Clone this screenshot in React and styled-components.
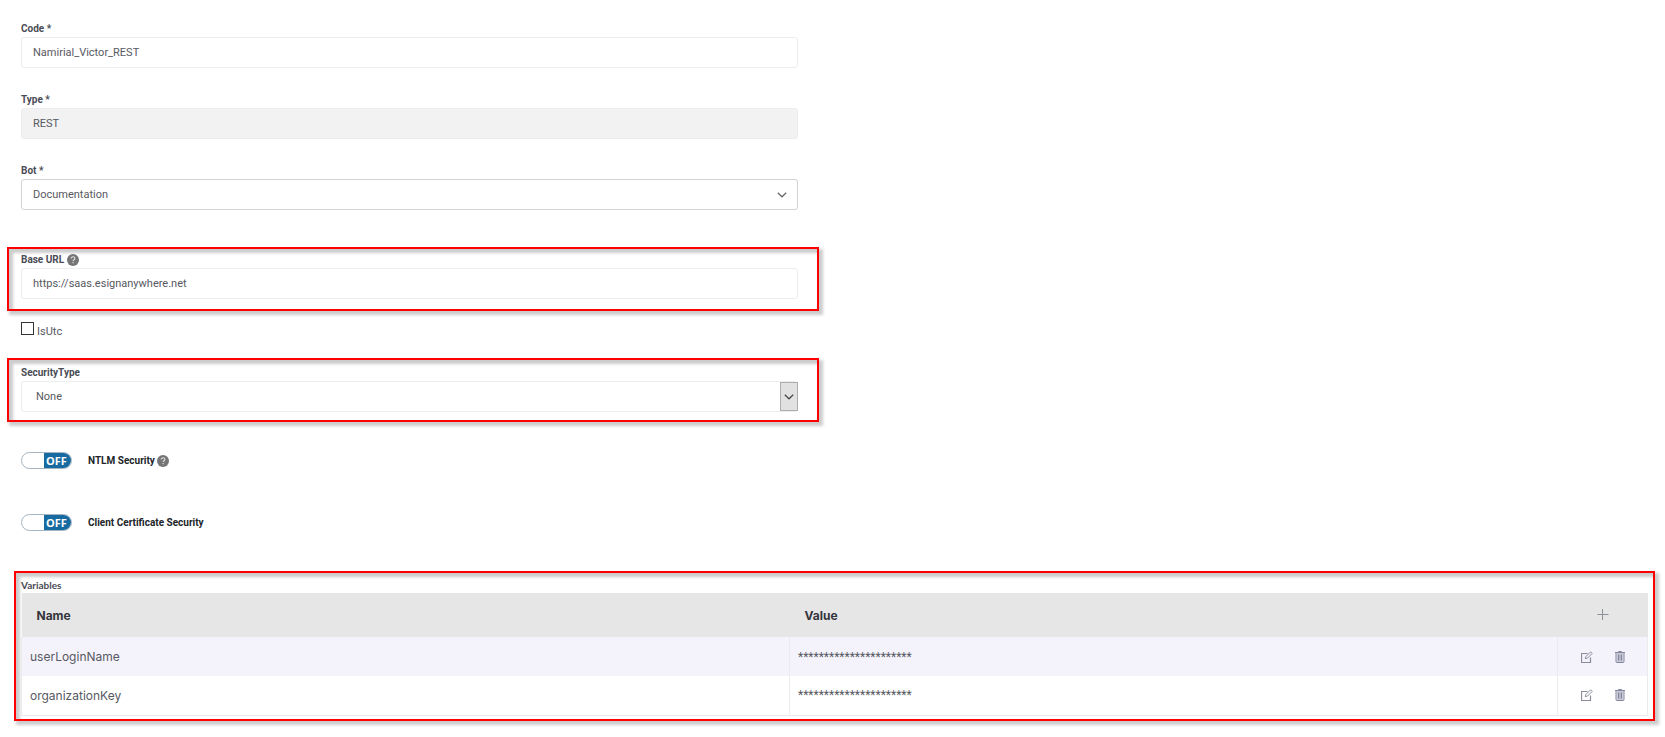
import React, { useState } from 'react'
import styled, { createGlobalStyle } from 'styled-components';

const GlobalStyle = createGlobalStyle`
  * {
    box-sizing: border-box;
  }
  body {
    margin: 0;
    background: #ffffff;
    color: #575962;
    font-family: Roboto, "Liberation Sans", sans-serif;
    font-size: 11px;
  }
`;

const variables = [
    { name: "userLoginName", value: "**********************" },
    { name: "organizationKey", value: "**********************" },
];

function HelpIcon() {
    return (
        <svg width="12" height="12" viewBox="0 0 12 12" aria-hidden="true">
            <circle cx="6" cy="6" r="6" fill="#757575" />
            <path d="M4.2 4.6C4.2 3.5 5 2.8 6 2.8s1.9.6 1.9 1.6c0 1.3-1.8 1.3-1.8 2.7M6.1 8.1v1.2" fill="none" stroke="#e4e4e4" strokeWidth="1.1" />
        </svg>
    )
}

function ChevronIcon({ color }) {
    return (
        <svg width="10" height="6" viewBox="0 0 10 6" fill="none" stroke={color} strokeWidth="1.2" aria-hidden="true">
            <path d="M.8.8 5 4.8 9.2.8" />
        </svg>
    )
}

function PlusIcon() {
    return (
        <svg width="12" height="12" viewBox="0 0 12 12" stroke="#8d8f99" aria-hidden="true">
            <path d="M.5 5.5h11M5.5 0v11" />
        </svg>
    )
}

function EditIcon() {
    return (
        <svg width="12" height="12" viewBox="0 0 12 12" fill="none" stroke="#8b8d9c" aria-hidden="true">
            <path d="M6.5 2.5h-6v9h9v-5" strokeWidth="1.2" />
            <path d="M4.3 7.7l.6-2.2L9.6.8l1.6 1.6L6.5 7.1z" />
        </svg>
    )
}

function TrashIcon() {
    return (
        <svg width="10" height="12" viewBox="0 0 10 12" fill="none" stroke="#8486a0" aria-hidden="true">
            <path d="M1.5 2h7v9.5h-7z" fill="#c9cad6" stroke="none" />
            <path d="M0 1.5h10M3.5 1V.5h3V1M1 2v8.5q0 1 1 1h6q1 0 1-1V2M3.5 3.5v6M6.5 3.5v6" />
            <path d="M5 3.5v6" strokeWidth=".6" />
        </svg>
    )
}

function App() {
    const [code, setCode] = useState("Namirial_Victor_REST");
    const [baseUrl, setBaseUrl] = useState("https://saas.esignanywhere.net");

    return (
        <Page>
            <GlobalStyle />
            <Form>
                <Field>
                    <Label htmlFor="code">Code *</Label>
                    <Input id="code" value={code} onChange={(e) => setCode(e.target.value)} />
                </Field>
                <Field>
                    <Label htmlFor="type">Type *</Label>
                    <Input id="type" value="REST" disabled />
                </Field>
                <Field>
                    <Label htmlFor="bot">Bot *</Label>
                    <SelectWrap>
                        <Select id="bot" $strong>
                            <option>Documentation</option>
                        </Select>
                        <Arrow><ChevronIcon color="#666666" /></Arrow>
                    </SelectWrap>
                </Field>
                <Highlight>
                    <Label htmlFor="baseUrl">Base URL <HelpIcon /></Label>
                    <Input id="baseUrl" value={baseUrl} onChange={(e) => setBaseUrl(e.target.value)} />
                </Highlight>
                <CheckRow>
                    <Checkbox id="isUtc" type="checkbox" />
                    <CheckLabel htmlFor="isUtc">IsUtc</CheckLabel>
                </CheckRow>
                <Highlight $low>
                    <Label htmlFor="securityType">SecurityType</Label>
                    <SelectWrap>
                        <Select id="securityType" $indent>
                            <option>None</option>
                        </Select>
                        <ArrowButton><ChevronIcon color="#444444" /></ArrowButton>
                    </SelectWrap>
                </Highlight>
                <Switches>
                    <SwitchRow>
                        <Switch>
                            <input id="ntlm" type="checkbox" role="switch" />
                            <span>OFF</span>
                        </Switch>
                        <SwitchLabel htmlFor="ntlm">NTLM Security <HelpIcon /></SwitchLabel>
                    </SwitchRow>
                    <SwitchRow>
                        <Switch>
                            <input id="clientCertificate" type="checkbox" role="switch" />
                            <span>OFF</span>
                        </Switch>
                        <SwitchLabel htmlFor="clientCertificate">Client Certificate Security</SwitchLabel>
                    </SwitchRow>
                </Switches>
            </Form>
            <TableHighlight>
                <TableTitle id="variables">Variables</TableTitle>
                <Table aria-labelledby="variables">
                    <colgroup>
                        <col />
                        <col />
                        <col className="actions" />
                    </colgroup>
                    <thead>
                        <tr>
                            <th>Name</th>
                            <th>Value</th>
                            <th>
                                <Actions>
                                    <IconButton aria-label="Add variable"><PlusIcon /></IconButton>
                                </Actions>
                            </th>
                        </tr>
                    </thead>
                    <tbody>
                        {
                            variables.map(({ name, value }) => {
                                return (
                                    <tr key={name}>
                                        <td>{name}</td>
                                        <td className="secret">{value}</td>
                                        <td>
                                            <Actions>
                                                <IconButton aria-label={"Edit " + name}><EditIcon /></IconButton>
                                                <IconButton aria-label={"Delete " + name}><TrashIcon /></IconButton>
                                            </Actions>
                                        </td>
                                    </tr>
                                )
                            })
                        }
                    </tbody>
                </Table>
            </TableHighlight>
        </Page>
    )
}

const Page = styled.main`
  padding: 21px 10px 16px 7px;
`;

const Form = styled.form`
  width: calc(50% - 12px);
`;

const Field = styled.div`
  padding: 0 21px 0 14px;
  margin-bottom: 24px;
  &:nth-of-type(3) {
    margin-bottom: 37px;
  }
`;

const Label = styled.label`
  display: flex;
  align-items: center;
  gap: 3px;
  height: 16px;
  padding-bottom: 1px;
  font-size: 10px;
  font-weight: 700;
  color: #4a4c55;
`;

const Input = styled.input`
  display: block;
  width: 100%;
  height: 31px;
  padding: 0 11px;
  border: 1px solid #ebedf2;
  border-radius: 3px;
  background: #ffffff;
  color: #575962;
  font: inherit;
  &:disabled {
    background: #f2f2f2;
  }
`;

const SelectWrap = styled.div`
  position: relative;
`;

const Select = styled.select`
  display: block;
  width: 100%;
  height: 31px;
  padding: 0 ${({ $indent }) => ($indent ? "14px" : "11px")};
  border: 1px solid ${({ $strong }) => ($strong ? "#d2d3d6" : "#ebedf2")};
  border-radius: 3px;
  background: #ffffff;
  color: #575962;
  font: inherit;
  appearance: none;
`;

const Arrow = styled.span`
  position: absolute;
  top: 0;
  bottom: 0;
  right: 11px;
  display: flex;
  align-items: center;
  pointer-events: none;
`;

const ArrowButton = styled(Arrow)`
  top: 1px;
  bottom: 1px;
  right: 0;
  width: 18px;
  justify-content: center;
  border: 1px solid #adadad;
  background: #e1e1e1;
`;

const Highlight = styled.div`
  padding: ${({ $low }) => ($low ? "5px 19px 8px 12px" : "3px 19px 10px 12px")};
  border: 2px solid #ff0000;
  box-shadow: 3px 3px 3px 1px #cccccc, inset 3px 3px 3px 1px #cccccc;
`;

const CheckRow = styled.div`
  display: flex;
  height: 47px;
  padding: 11px 14px 0;
  gap: 3px;
`;

const Checkbox = styled.input`
  appearance: none;
  width: 13px;
  height: 13px;
  margin: 0;
  border: 1px solid #333333;
  background: #ffffff;
`;

const CheckLabel = styled.label`
  padding-top: 3px;
  line-height: 14px;
`;

const Switches = styled.div`
  display: flex;
  flex-direction: column;
  gap: 45px;
  padding: 30px 14px 40px;
`;

const SwitchRow = styled.div`
  display: flex;
  align-items: center;
  gap: 16px;
`;

const Switch = styled.div`
  position: relative;
  display: flex;
  justify-content: flex-end;
  width: 51px;
  height: 17px;
  overflow: hidden;
  border: 1px solid #a3b5c3;
  border-radius: 9px;
  background: #ffffff;
  input {
    position: absolute;
    inset: 0;
    width: 100%;
    height: 100%;
    margin: 0;
    opacity: 0;
  }
  span {
    width: 27px;
    padding-left: 2px;
    background: #186ba0;
    color: #ffffff;
    font: 700 11px/15px "Open Sans", sans-serif;
  }
`;

const SwitchLabel = styled.label`
  display: flex;
  align-items: center;
  gap: 2px;
  color: #212529;
  font-size: 10px;
  font-weight: 700;
`;

const TableHighlight = styled(Highlight)`
  margin-left: 7px;
  padding: 5px 5px 3px;
`;

const TableTitle = styled.div`
  height: 15px;
  color: #4a4c55;
  font: 700 10px/15px Lato, sans-serif;
`;

const Table = styled.table`
  width: 100%;
  table-layout: fixed;
  border-collapse: collapse;
  font-family: Inter, sans-serif;
  font-size: 12px;
  .actions {
    width: 90px;
  }
  th {
    height: 44px;
    padding: 0 15px;
    background: #e6e6e6;
    color: #33353b;
    text-align: left;
    font-weight: 700;
  }
  td {
    height: 39px;
    padding: 0 8px;
    border: solid #ebebeb;
    border-width: 0 1px;
  }
  tbody tr:nth-child(odd) {
    background: #f4f3fb;
  }
  tbody tr:last-child td {
    border-bottom-width: 1px;
  }
  .secret {
    font-family: Roboto, sans-serif;
  }
`;

const Actions = styled.div`
  display: flex;
  align-items: center;
  justify-content: center;
  gap: 22px;
`;

const IconButton = styled.button`
  display: inline-flex;
  padding: 0;
  border: 0;
  background: none;
`;

export default App
